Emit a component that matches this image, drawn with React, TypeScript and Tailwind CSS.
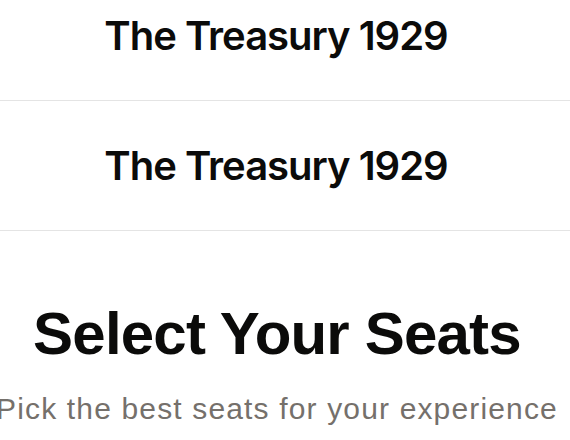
const venues = ['The Treasury 1929', 'The Treasury 1929'];

export default function App() {
  return (
    <div className="h-[440px] w-[570px] overflow-hidden bg-white font-['Inter',sans-serif] text-[#0b0b0a]">
      <div className="-mt-[29px]">
        {venues.map((name, i) => (
          <div key={i} className="flex h-[130px] items-center border-b border-[#e4e4e4] pr-[18px]">
            <div className="w-full text-center text-[40px] font-semibold tracking-[-1px]">{name}</div>
          </div>
        ))}
      </div>
      <div className="flex flex-col items-center pr-[16px] pt-[73px] font-['Liberation_Sans',Arial,sans-serif]">
        <h1 className="whitespace-nowrap text-[60px] font-bold leading-none tracking-[-0.8px]">Select Your Seats</h1>
        <p className="mt-[30px] whitespace-nowrap text-[30px] leading-none tracking-[1.15px] text-[#75706b]">
          Pick the best seats for your experience
        </p>
      </div>
    </div>
  );
}
